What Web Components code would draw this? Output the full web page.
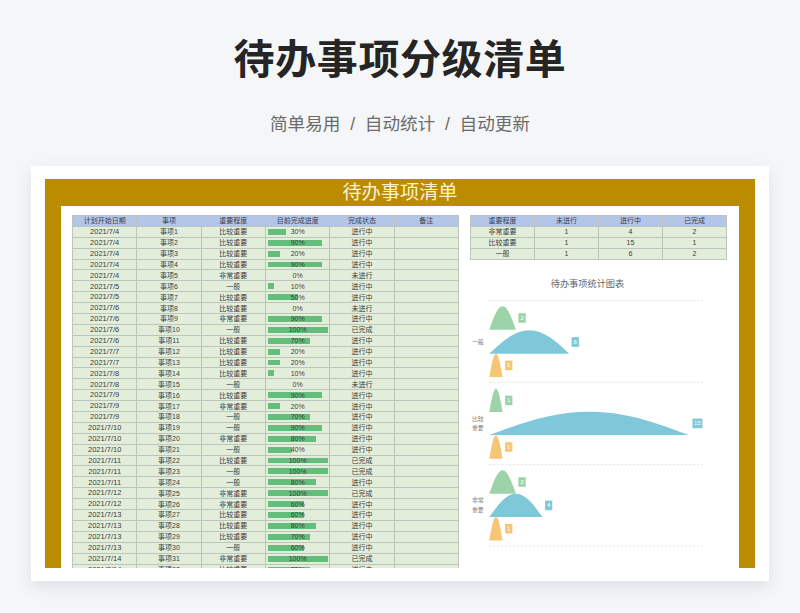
<!DOCTYPE html>
<html lang="zh"><head><meta charset="utf-8">
<style>
html,body{margin:0;padding:0;background:#f5f6f8;}
body{width:800px;height:613px;overflow:hidden;font-family:"Liberation Sans","Noto Sans CJK SC",sans-serif;}
</style></head><body>
<sheet-page></sheet-page>
<script>
const FONT='"Liberation Sans","Noto Sans CJK SC",sans-serif';
const raw=`4|比较重要|30
4|比较重要|90
4|比较重要|20
4|比较重要|90
4|非常重要|0
5|一般|10
5|比较重要|50
6|比较重要|0
6|非常重要|90
6|一般|100
6|比较重要|70
7|比较重要|20
7|比较重要|20
8|比较重要|10
8|一般|0
9|比较重要|90
9|非常重要|20
9|一般|70
10|一般|90
10|非常重要|80
10|一般|40
11|比较重要|100
11|一般|100
11|一般|80
12|非常重要|100
12|非常重要|60
13|比较重要|60
13|比较重要|80
13|比较重要|70
13|一般|60
14|非常重要|100
14|比较重要|70`.split('\n').map(l=>l.split('|'));
const status=p=>p==0?'未进行':p==100?'已完成':'进行中';

const cellCss=`
.t{display:grid;grid-template-columns:repeat(var(--cols),1fr);border-top:1px solid #bcc4bc;border-left:1px solid #bcc4bc;background:#e2eeda;font:7px/1 ${FONT};color:#3c3c3c;}
.c{height:9.9px;border-right:1px solid #bcc4bc;border-bottom:1px solid #bcc4bc;display:flex;align-items:center;justify-content:center;white-space:nowrap;position:relative;min-width:0;}
.h{background:#b4c6e7;color:#3a4050;}
.d{font-size:7.5px;}
`;

class ProgressCell extends HTMLElement{
  constructor(){super();const p=this.getAttribute('value');
    this.attachShadow({mode:'open'}).innerHTML=`<style>
    :host{display:flex;align-items:center;justify-content:center;height:100%;width:100%;position:relative;}
    .b{position:absolute;left:1.5px;top:2px;bottom:2px;width:${p*0.6}px;background:#63be7b;}
    span{position:relative}
    </style><div class="b"></div><span>${p}%</span>`;}
}
customElements.define('progress-cell',ProgressCell);

class TaskTable extends HTMLElement{
  constructor(){super();
    const head=['计划开始日期','事项','重要程度','目前完成进度','完成状态','备注'];
    let h=head.map(x=>`<div class="c h">${x}</div>`).join('');
    raw.forEach((r,i)=>{h+=`<div class="c d">2021/7/${r[0]}</div><div class="c">事项${i+1}</div><div class="c">${r[1]}</div><div class="c"><progress-cell value="${r[2]}"></progress-cell></div><div class="c">${status(+r[2])}</div><div class="c"></div>`;});
    this.attachShadow({mode:'open'}).innerHTML=`<style>:host{display:block;width:387px;height:353px;overflow:hidden;}${cellCss}.t{--cols:6}</style><div class="t">${h}</div>`;}
}
customElements.define('task-table',TaskTable);

class SummaryTable extends HTMLElement{
  constructor(){super();
    const rows=[['重要程度','未进行','进行中','已完成'],['非常重要',1,4,2],['比较重要',1,15,1],['一般',1,6,2]];
    const h=rows.map((r,i)=>r.map(x=>`<div class="c ${i?'':'h'}">${x}</div>`).join('')).join('');
    this.attachShadow({mode:'open'}).innerHTML=`<style>:host{display:block;width:257px;}${cellCss}.t{--cols:4}</style><div class="t">${h}</div>`;}
}
customElements.define('summary-table',SummaryTable);

class StatChart extends HTMLElement{
  constructor(){super();
    const X0=489.3,U=13.3,G='#9dd3a8',B='#7ec8da',O='#f6c674';
    const peak=(v,base,h,col)=>{const w=v*U,x=X0,e=x+w,m=x+w/2,f=n=>n.toFixed(2);
      return `<path d="M${f(x)} ${f(base)}C${f(x+w*.17)} ${f(base-h*.55)} ${f(x+w*.32)} ${f(base-h)} ${f(m)} ${f(base-h)}C${f(x+w*.68)} ${f(base-h)} ${f(x+w*.83)} ${f(base-h*.55)} ${f(e)} ${f(base)}Z" fill="${col}"/>`;};
    const tag=(v,cy,col)=>{const t=String(v),w=t.length>1?10:7.3,x=X0+v*U+(t.length>1?3.6:2.5);
      return `<rect x="${x}" y="${cy-4.8}" width="${w}" height="9.6" fill="${col}"/><text x="${x+w/2}" y="${cy+2.1}" text-anchor="middle" font-size="6" fill="#fff">${t}</text>`;};
    const groups=[
      {v:[2,6,1],b:[329.3,353.3,376.7],l:[['一般',341.3]]},
      {v:[1,15,1],b:[411.7,434.7,458.3],l:[['比较',418.3],['重要',427.7]]},
      {v:[2,4,1],b:[493.3,516.7,540],l:[['非常',500],['重要',509.3]]}
    ];
    let s='';
    [300,382,464.3,545.7].forEach(y=>{s+=`<line x1="489" x2="703" y1="${y}" y2="${y}" stroke="#e2e2e2" stroke-width=".8" stroke-dasharray="2.5 1.5"/>`;});
    groups.forEach(g=>{
      [G,B,O].forEach((c,i)=>{
        s+=peak(g.v[i],g.b[i],23.4,c);
        s+=tag(g.v[i],g.b[i]-11.7,c);
      });
      g.l.forEach(([t,y])=>{s+=`<text x="483.5" y="${y+2.1}" text-anchor="end" font-size="5.8" fill="#808080">${t}</text>`;});
    });
    this.attachShadow({mode:'open'}).innerHTML=`<style>
    :host{display:flex;flex-direction:column;width:257px;}
    .title{font:9.2px/1 ${FONT};color:#666;text-align:center;margin-top:20px;height:0;position:relative;left:-11px}
    svg{display:block;width:257px;height:290px;font-family:${FONT};}
    </style><div class="title">待办事项统计图表</div><svg viewBox="470 279.6 257 290">${s}</svg>`;}
}
customElements.define('stat-chart',StatChart);

class SheetPage extends HTMLElement{
  constructor(){super();
    this.attachShadow({mode:'open'}).innerHTML=`<style>
    :host{display:flex;flex-direction:column;align-items:center;width:800px;height:613px;}
    h1{margin:0;padding-top:34px;height:52px;font:700 41px/52px ${FONT};color:#252525;letter-spacing:.6px;}
    .sub{margin-top:27px;height:22px;font:17.6px/22px ${FONT};color:#6b6b6b;white-space:pre;}
    .card{margin-top:31px;width:738px;height:415px;box-sizing:border-box;background:#fff;padding:13px 14px;box-shadow:0 6px 16px rgba(60,70,90,.12);}
    .gold{height:389px;background:#bc8c00;padding:0 16px;display:flex;flex-direction:column;}
    .head{height:27px;flex:none;color:#fff3cf;font:19.2px/28px ${FONT};text-align:center;}
    .body{flex:1;min-height:0;background:#fff;padding:9px 11px 0;display:flex;gap:11px;overflow:hidden;}
    .right{display:flex;flex-direction:column;}
    </style>
    <h1>待办事项分级清单</h1>
    <div class="sub">简单易用  /  自动统计  /  自动更新</div>
    <div class="card"><div class="gold"><div class="head">待办事项清单</div>
      <div class="body"><task-table></task-table><div class="right"><summary-table></summary-table><stat-chart></stat-chart></div></div>
    </div></div>`;}
}
customElements.define('sheet-page',SheetPage);
</script>
</body></html>
